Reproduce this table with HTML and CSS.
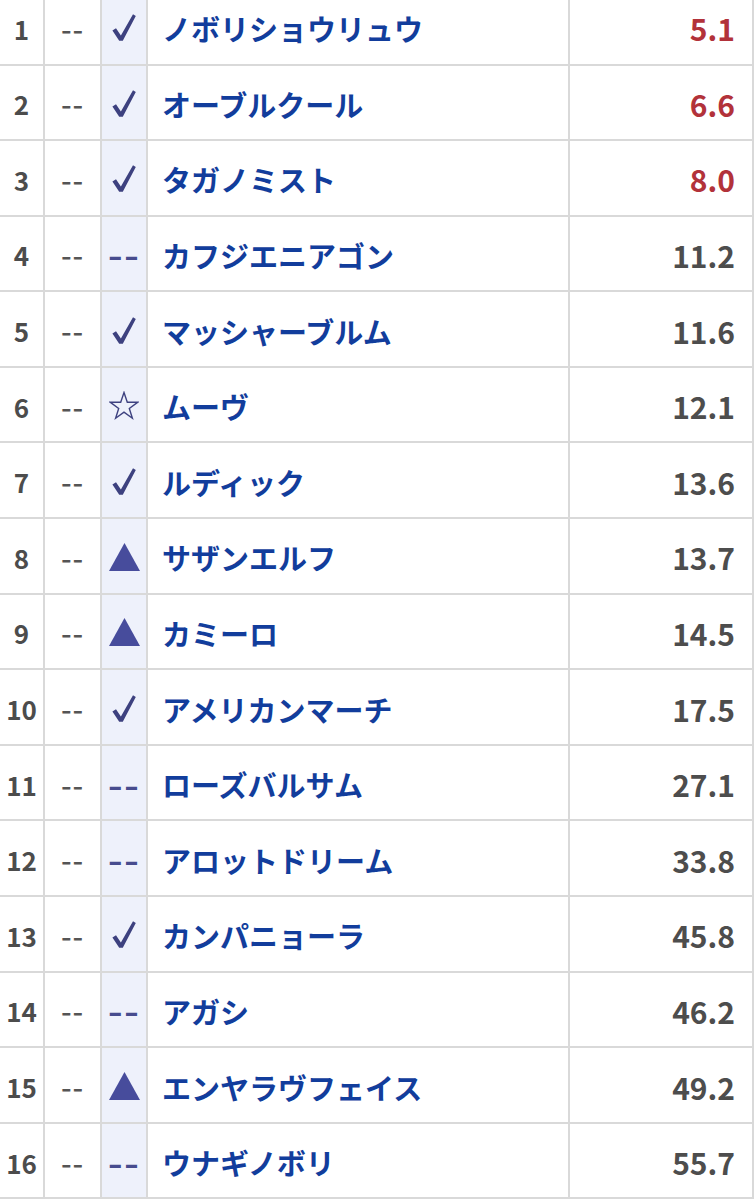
FILE: index.html
```html
<!DOCTYPE html>
<html lang="ja">
<head>
<meta charset="utf-8">
<link rel="stylesheet" href="styles.css">
<title>odds</title>
</head>
<body>
<svg width="0" height="0" class="defs">
  <defs>
    <symbol id="chk" viewBox="0 0 24 27"><path d="M0.4 16.4 L4 14.2 L8.9 21.4 L21 0.3 L23.8 1.9 L10.8 26.8 L7.2 26.8 Z"/></symbol>
    <symbol id="star" viewBox="0 0 30 30"><polygon points="15,1.5 18.3,11.3 28.6,11.3 20.3,17.4 23.4,27.3 15,21.2 6.6,27.3 9.7,17.4 1.4,11.3 11.7,11.3"/></symbol>
    <symbol id="tri" viewBox="0 0 31 28"><polygon points="15.5,0 31,28 0,28"/></symbol>
  </defs>
</svg>
<div class="table">
  <div class="row"><div class="c num">1</div><div class="c mk"><span class="mkd">--</span></div><div class="c sym"><svg class="i-chk"><use href="#chk"/></svg></div><div class="c name">ノボリショウリュウ</div><div class="c odds hot">5.1</div></div>
  <div class="row"><div class="c num">2</div><div class="c mk"><span class="mkd">--</span></div><div class="c sym"><svg class="i-chk"><use href="#chk"/></svg></div><div class="c name">オーブルクール</div><div class="c odds hot">6.6</div></div>
  <div class="row"><div class="c num">3</div><div class="c mk"><span class="mkd">--</span></div><div class="c sym"><svg class="i-chk"><use href="#chk"/></svg></div><div class="c name">タガノミスト</div><div class="c odds hot">8.0</div></div>
  <div class="row"><div class="c num">4</div><div class="c mk"><span class="mkd">--</span></div><div class="c sym"><span class="dash">--</span></div><div class="c name">カフジエニアゴン</div><div class="c odds">11.2</div></div>
  <div class="row"><div class="c num">5</div><div class="c mk"><span class="mkd">--</span></div><div class="c sym"><svg class="i-chk"><use href="#chk"/></svg></div><div class="c name">マッシャーブルム</div><div class="c odds">11.6</div></div>
  <div class="row"><div class="c num">6</div><div class="c mk"><span class="mkd">--</span></div><div class="c sym"><svg class="i-star"><use href="#star"/></svg></div><div class="c name">ムーヴ</div><div class="c odds">12.1</div></div>
  <div class="row"><div class="c num">7</div><div class="c mk"><span class="mkd">--</span></div><div class="c sym"><svg class="i-chk"><use href="#chk"/></svg></div><div class="c name">ルディック</div><div class="c odds">13.6</div></div>
  <div class="row"><div class="c num">8</div><div class="c mk"><span class="mkd">--</span></div><div class="c sym"><svg class="i-tri"><use href="#tri"/></svg></div><div class="c name">サザンエルフ</div><div class="c odds">13.7</div></div>
  <div class="row"><div class="c num">9</div><div class="c mk"><span class="mkd">--</span></div><div class="c sym"><svg class="i-tri"><use href="#tri"/></svg></div><div class="c name">カミーロ</div><div class="c odds">14.5</div></div>
  <div class="row"><div class="c num">10</div><div class="c mk"><span class="mkd">--</span></div><div class="c sym"><svg class="i-chk"><use href="#chk"/></svg></div><div class="c name">アメリカンマーチ</div><div class="c odds">17.5</div></div>
  <div class="row"><div class="c num">11</div><div class="c mk"><span class="mkd">--</span></div><div class="c sym"><span class="dash">--</span></div><div class="c name">ローズバルサム</div><div class="c odds">27.1</div></div>
  <div class="row"><div class="c num">12</div><div class="c mk"><span class="mkd">--</span></div><div class="c sym"><span class="dash">--</span></div><div class="c name">アロットドリーム</div><div class="c odds">33.8</div></div>
  <div class="row"><div class="c num">13</div><div class="c mk"><span class="mkd">--</span></div><div class="c sym"><svg class="i-chk"><use href="#chk"/></svg></div><div class="c name">カンパニョーラ</div><div class="c odds">45.8</div></div>
  <div class="row"><div class="c num">14</div><div class="c mk"><span class="mkd">--</span></div><div class="c sym"><span class="dash">--</span></div><div class="c name">アガシ</div><div class="c odds">46.2</div></div>
  <div class="row"><div class="c num">15</div><div class="c mk"><span class="mkd">--</span></div><div class="c sym"><svg class="i-tri"><use href="#tri"/></svg></div><div class="c name">エンヤラヴフェイス</div><div class="c odds">49.2</div></div>
  <div class="row"><div class="c num">16</div><div class="c mk"><span class="mkd">--</span></div><div class="c sym"><span class="dash">--</span></div><div class="c name">ウナギノボリ</div><div class="c odds">55.7</div></div>
</div>
</body>
</html>
```

FILE: styles.css
```css
html, body {
  margin: 0;
  padding: 0;
  background: #fff;
  overflow: hidden;
}
body {
  font-family: "Noto Sans CJK JP", "Noto Sans", sans-serif;
  color: #555;
}
.defs {
  position: absolute;
  width: 0;
  height: 0;
}
.table {
  margin-top: -10.1px;
  width: 754px;
}
.row {
  display: grid;
  grid-template-columns: 45px 57px 46px 422px 184px;
  height: 75.6px;
}
.c {
  box-sizing: border-box;
  border-right: 2px solid #d9d9d9;
  border-bottom: 2px solid #d9d9d9;
  display: flex;
  align-items: center;
  padding-top: 3px;
}
.num {
  justify-content: center;
  font-size: 26px;
  font-weight: 700;
  color: #4c4c4c;
}
.mk {
  justify-content: center;
  color: #555;
}
.mkd {
  display: inline-block;
  font-size: 24px;
  font-weight: 700;
  letter-spacing: 0.5px;
  transform: scaleX(1.2);
}
.sym {
  justify-content: center;
  background: #eef1fb;
  color: #42468a;
  padding-top: 2px;
}
.sym svg {
  fill: #3d417f;
}
.i-chk {
  width: 24px;
  height: 27px;
}
.i-star {
  width: 30px;
  height: 30px;
  fill: none !important;
  stroke: #3e4280;
  stroke-width: 1.4;
  stroke-linejoin: miter;
}
.i-tri {
  width: 31px;
  height: 28px;
  fill: #474c9c !important;
}
.dash {
  display: inline-block;
  font-size: 30px;
  font-weight: 700;
  letter-spacing: 1px;
  transform: scaleX(1.35);
  color: #474c8e;
}
.name {
  padding-left: 14px;
  font-size: 29px;
  font-weight: 700;
  color: #123d9c;
  white-space: nowrap;
}
.odds {
  justify-content: flex-end;
  padding-right: 17px;
  font-size: 30px;
  font-weight: 700;
  color: #4d4d4d;
}
.odds.hot {
  color: #b2323a;
}
```
